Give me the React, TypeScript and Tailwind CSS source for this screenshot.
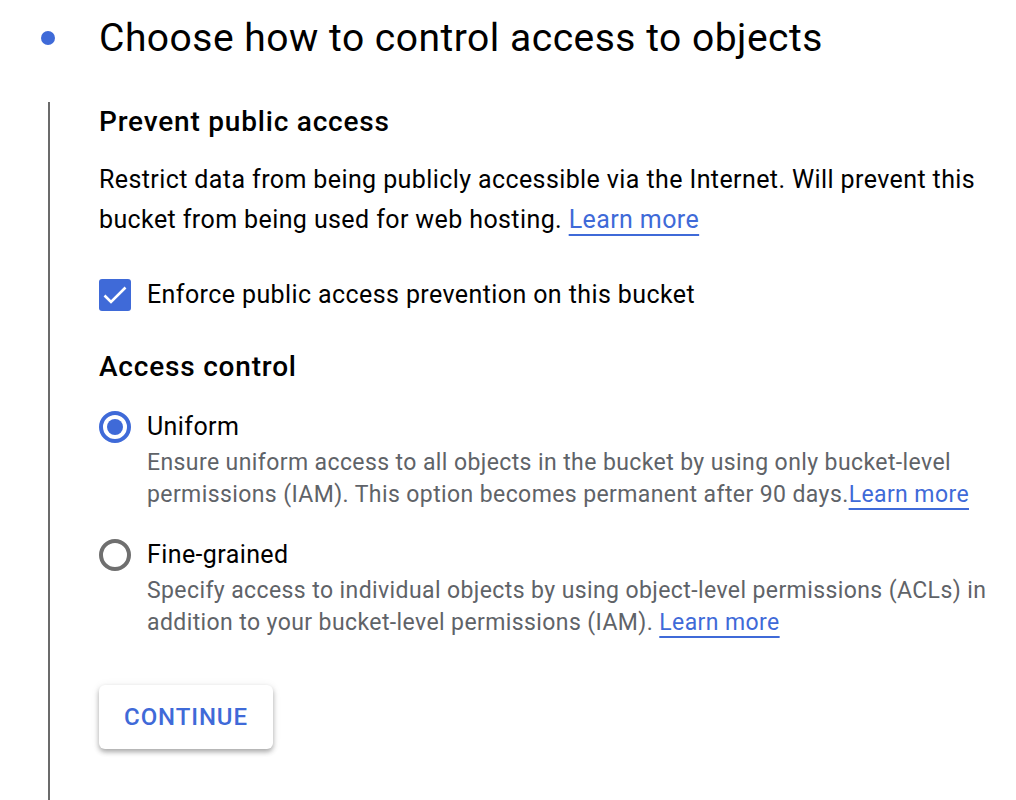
import React from 'react';

const LearnMore: React.FC = () => (
  <a
    href="#"
    className="text-[#3f6ad8] underline decoration-2 underline-offset-[6px] decoration-[#3f6ad8]"
  >
    Learn more
  </a>
);

const Radio: React.FC<{ checked?: boolean }> = ({ checked }) => (
  <span
    className={`flex h-8 w-8 shrink-0 items-center justify-center rounded-full border-4 ${
      checked ? 'border-[#3f6ad8]' : 'border-[#6f6f6f]'
    }`}
  >
    {checked && <span className="h-4 w-4 rounded-full bg-[#3f6ad8]" />}
  </span>
);

export default function App() {
  return (
    <div className="h-[800px] w-[1016px] overflow-hidden bg-white font-['Roboto',sans-serif] text-[#202124]">
      <div className="flex items-center pt-[14px]">
        <div className="flex w-[99px] justify-center">
          <span className="ml-[-4px] h-[14px] w-[14px] rounded-full bg-[#3f6ad8]" />
        </div>
        <h1 className="text-[39px] leading-[48px] tracking-[0.5px] text-black">
          Choose how to control access to objects
        </h1>
      </div>

      <div className="mt-[40px] flex">
        <div className="w-[99px] shrink-0">
          <div className="ml-[48px] h-[700px] w-[2px] bg-[#6b6b6b]" />
        </div>
        <div className="pr-6">
          <h2 className="text-[28px] font-medium leading-[40px] tracking-[0.8px] text-black">Prevent public access</h2>
          <p className="mt-[18px] text-[25px] leading-[40px] tracking-[0.4px] text-black">
            Restrict data from being publicly accessible via the Internet. Will prevent this bucket from being used for
            web hosting. <LearnMore />
          </p>

          <label className="mt-[35px] flex items-center gap-[16px]">
            <span className="flex h-8 w-8 items-center justify-center rounded-[3px] bg-[#3f6ad8]">
              <svg viewBox="0 0 32 32" className="h-8 w-8" fill="none" stroke="white" strokeWidth="2.6">
                <path d="M5.5 16.5l6.5 6.5L26.5 8.5" />
              </svg>
            </span>
            <span className="text-[25px] leading-[40px] tracking-[0.4px] text-black">
              Enforce public access prevention on this bucket
            </span>
          </label>

          <h2 className="mt-[32px] text-[28px] font-medium leading-[40px] tracking-[0.8px] text-black">Access control</h2>

          <div className="mt-[20px] flex flex-col gap-[24px]">
            <div>
              <div className="flex items-center gap-[16px]">
                <Radio checked />
                <span className="text-[25px] leading-[40px] tracking-[0.4px] text-black">Uniform</span>
              </div>
              <p className="ml-[48px] text-[23px] leading-[32px] tracking-[0.4px] text-[#5f6368]">
                Ensure uniform access to all objects in the bucket by using only bucket-level permissions (IAM). This
                option becomes permanent after 90 days.<LearnMore />
              </p>
            </div>
            <div>
              <div className="flex items-center gap-[16px]">
                <Radio />
                <span className="text-[25px] leading-[40px] tracking-[0.4px] text-black">Fine-grained</span>
              </div>
              <p className="ml-[48px] text-[23px] leading-[32px] tracking-[0.4px] text-[#5f6368]">
                Specify access to individual objects by using object-level permissions (ACLs) in addition to your
                bucket-level permissions (IAM). <LearnMore />
              </p>
            </div>
          </div>

          <button className="mt-[46px] h-[64px] w-[174px] rounded-[6px] bg-white text-[24px] font-medium tracking-[0.9px] text-[#3f6ad8] shadow-[0_3px_5px_rgba(0,0,0,0.3),0_1px_10px_rgba(0,0,0,0.08)]">
            CONTINUE
          </button>
        </div>
      </div>
    </div>
  );
}
